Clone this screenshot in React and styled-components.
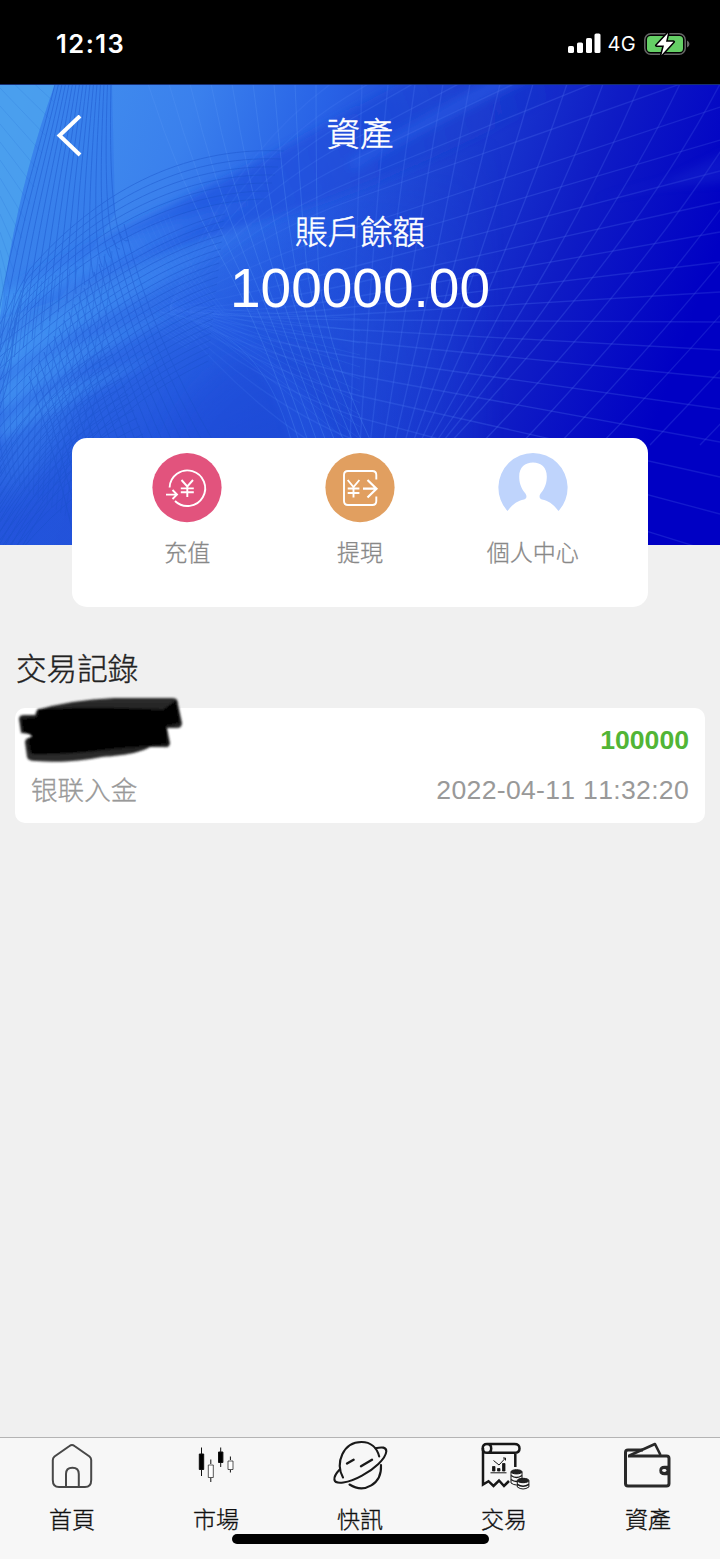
import React from "react";
import styled, { createGlobalStyle } from "styled-components";

const GlobalStyle = createGlobalStyle`
  *, *::before, *::after { box-sizing: border-box; }
  body { margin: 0; background: #f0f0f0; }
  svg { display: block; }
`;

const Screen = styled.div`
  width: 720px;
  height: 1559px;
  display: flex;
  flex-direction: column;
  background: #f0f0f0;
  font-family: "Liberation Sans", "Noto Sans CJK TC", sans-serif;
  font-weight: 300;
  font-kerning: none;
  overflow: hidden;
`;

const StatusBar = styled.div`
  flex: none;
  height: 84px;
  padding: 3px 30px 0 56px;
  display: flex;
  align-items: center;
  background: #000;
  color: #fff;
  font-family: Inter, sans-serif;
`;
const Clock = styled.span`
  flex: 1;
  font-size: 25.5px;
  font-weight: 600;
  letter-spacing: 1.5px;
`;
const Network = styled.span`
  font-size: 20px;
  font-weight: 400;
  margin: 0 8px 0 7px;
  letter-spacing: 0.3px;
`;

const Header = styled.header`
  flex: none;
  position: relative;
  height: 461px;
  color: #fff;
  background: #1a35d0;
`;
const Backdrop = styled.svg`
  position: absolute;
  inset: 0;
`;
const HeaderContent = styled.div`
  position: relative;
  display: flex;
  flex-direction: column;
  align-items: center;
  padding-top: 2px;
`;
const TitleBar = styled.div`
  width: 100%;
  height: 100px;
  padding: 0 56px;
  display: grid;
  grid-template-columns: 26px 1fr 26px;
  align-items: center;
`;
const Title = styled.h1`
  margin: -2px 0 0;
  text-align: center;
  font-size: 33.5px;
  font-weight: 300;
  line-height: 48px;
  -webkit-text-stroke: 0.5px;
`;
const BalanceLabel = styled.div`
  margin-top: 23px;
  font-size: 32.5px;
  line-height: 48px;
  -webkit-text-stroke: 0.5px;
`;
const Balance = styled.div`
  font-size: 55px;
  line-height: 60px;
  font-weight: 400;
  margin-top: 1px;
`;

const ActionCard = styled.section`
  flex: none;
  position: relative;
  width: 576px;
  height: 169px;
  margin: -107px auto 0;
  padding: 15px 29px 0;
  border-radius: 15px;
  background: #fff;
  display: grid;
  grid-template-columns: repeat(3, 1fr);
`;
const Action = styled.div`
  display: flex;
  flex-direction: column;
  align-items: center;
  gap: 13px;
  color: #888;
  font-size: 23px;
  line-height: 34px;
  -webkit-text-stroke: 0.3px;
`;

const Records = styled.section`
  flex: 1;
  padding: 39px 15px 0;
`;
const RecordsTitle = styled.h2`
  margin: 0 0 16px 1px;
  color: #222;
  font-size: 30.6px;
  line-height: 46px;
  font-weight: 300;
  -webkit-text-stroke: 0.4px;
`;
const Record = styled.article`
  position: relative;
  height: 115px;
  padding: 12px 16px 0;
  border-radius: 10px;
  background: #fff;
`;
const RecordLine = styled.div`
  display: flex;
  justify-content: ${(p) => (p.$end ? "flex-end" : "space-between")};
  height: ${(p) => (p.$end ? 40 : 36)}px;
  margin-top: ${(p) => (p.$end ? 0 : 12)}px;
  line-height: 40px;
  color: #999;
  font-size: 26.6px;
`;
const Method = styled.span`
  font-family: "Noto Sans CJK SC", sans-serif;
  line-height: 34px;
  -webkit-text-stroke: 0.3px;
`;
const Time = styled.span`
  line-height: 36px;
  font-weight: 400;
  letter-spacing: 0.3px;
`;
const Amount = styled.strong`
  color: #52b536;
  font-weight: 700;
  font-size: 26.6px;
`;
const Scribble = styled.svg`
  position: absolute;
  left: 0;
  top: -14px;
`;

const TabBar = styled.nav`
  flex: none;
  position: relative;
  height: 122px;
  border-top: 1px solid #b4b4b4;
  background: #f7f7f7;
  display: grid;
  grid-template-columns: repeat(5, 1fr);
`;
const Tab = styled.div`
  display: flex;
  flex-direction: column;
  align-items: center;
  gap: 9px;
  color: #111;
  font-size: 23px;
  line-height: 34px;
  -webkit-text-stroke: 0.35px;
`;
const HomeIndicator = styled.div`
  position: absolute;
  left: 232px;
  top: 96px;
  width: 257px;
  height: 10px;
  border-radius: 5px;
  background: #000;
`;

const range = (n) => Array.from({ length: n }, (_, i) => i);

/* Light lines falling from the top edge: [x at the top, bend x, bottom x] */
const steepLines = [
  [362, 357, 350], [388, 372, 360], [415, 392, 370], [443, 416, 383],
  [470, 440, 394], [500, 461, 404], [533, 486, 412], [567, 512, 419],
  [603, 542, 427], [640, 570, 434], [680, 600, 440], [720, 633, 448],
  [762, 668, 480], [806, 705, 520], [853, 745, 558], [903, 790, 600],
  [957, 838, 650], [1015, 890, 700],
];

/* Light lines fanning out to the right edge: [y at x=360, y at x=720] */
const fanLines = [
  [-20, -260], [5, -215], [30, -175], [52, -138], [73, -98], [94, -52],
  [113, -14], [142, 23], [162, 56], [181, 87], [198, 118], [212, 148],
  [222, 178], [230, 208], [236, 238], [246, 266], [258, 294], [274, 325],
  [292, 358], [312, 393], [334, 430], [358, 470], [384, 512],
];

const fanPath = ([mid, edge]) => {
  const slope = (edge - mid) / 360;
  return `M170 ${226 + slope * 6}Q${255 + slope * 30} ${mid - slope * 115} 360 ${mid}L720 ${edge}`;
};

function HeaderBackdrop() {
  return (
    <Backdrop width="720" height="461" viewBox="0 0 720 461" fill="none">
      <defs>
        <linearGradient id="base" gradientUnits="userSpaceOnUse" x1="0" y1="30" x2="680" y2="270">
          <stop offset="0" stopColor="#4594ee" />
          <stop offset="0.25" stopColor="#3a80ed" />
          <stop offset="0.42" stopColor="#2862e6" />
          <stop offset="0.6" stopColor="#1c40d2" />
          <stop offset="0.8" stopColor="#0f1cc5" />
          <stop offset="1" stopColor="#0000c4" />
        </linearGradient>
        <linearGradient id="low" gradientUnits="userSpaceOnUse" x1="120" y1="170" x2="190" y2="380">
          <stop offset="0" stopColor="#2050da" stopOpacity="0" />
          <stop offset="0.55" stopColor="#2050da" stopOpacity="0.6" />
          <stop offset="1" stopColor="#1f4cd8" stopOpacity="0.85" />
        </linearGradient>
        <linearGradient id="fadeRight" x1="0" y1="0" x2="1" y2="0">
          <stop offset="0" stopColor="#fff" />
          <stop offset="0.4" stopColor="#fff" />
          <stop offset="0.7" stopColor="#000" />
        </linearGradient>
        <linearGradient id="ray" gradientUnits="userSpaceOnUse" x1="0" y1="300" x2="330" y2="150">
          <stop offset="0" stopColor="#48a2f6" stopOpacity="0.65" />
          <stop offset="0.5" stopColor="#3c8af3" stopOpacity="0.45" />
          <stop offset="1" stopColor="#2f72ee" stopOpacity="0" />
        </linearGradient>
        <linearGradient id="shade" gradientUnits="userSpaceOnUse" x1="30" y1="210" x2="560" y2="0">
          <stop offset="0" stopColor="#2560e6" stopOpacity="0.3" />
          <stop offset="0.35" stopColor="#1e50de" stopOpacity="0.7" />
          <stop offset="0.7" stopColor="#1b40d2" stopOpacity="0.5" />
          <stop offset="1" stopColor="#1838ca" stopOpacity="0" />
        </linearGradient>
        <linearGradient id="gridFade" gradientUnits="userSpaceOnUse" x1="170" y1="0" x2="720" y2="0">
          <stop offset="0" stopColor="#4a85f5" stopOpacity="0.08" />
          <stop offset="0.3" stopColor="#467bf4" stopOpacity="0.26" />
          <stop offset="0.65" stopColor="#4868ea" stopOpacity="0.33" />
          <stop offset="1" stopColor="#3648de" stopOpacity="0.33" />
        </linearGradient>
        <mask id="lowMask"><rect width="720" height="461" fill="url(#fadeRight)" /></mask>
        <filter id="soft" x="-20%" y="-20%" width="140%" height="140%"><feGaussianBlur stdDeviation="5" /></filter>
        <filter id="softer" x="-20%" y="-20%" width="140%" height="140%"><feGaussianBlur stdDeviation="12" /></filter>
      </defs>
      <rect width="720" height="461" fill="url(#base)" />
      <rect width="720" height="461" fill="url(#low)" mask="url(#lowMask)" />
      <path d="M0 0H55Q15 110 0 235Z" fill="#4ca3ee" opacity="0.75" />
      <path d="M55 0Q15 110 0 235L60 215L115 130L112 0Z" fill="#2c70e8" opacity="0.4" />
      <g filter="url(#soft)">
        <path d="M20 195C110 150 210 105 300 55Q370 15 420 -10L600 -10C470 60 360 110 250 140C160 165 80 200 20 230Z" fill="url(#shade)" />
        <path d="M0 212C90 165 170 130 270 112C190 150 90 185 0 236Z" fill="url(#ray)" />
        <path d="M0 262C80 210 170 170 290 125C190 190 90 235 0 290Z" fill="url(#ray)" />
        <path d="M0 300C60 262 110 245 190 222C120 262 60 285 0 330Z" fill="url(#ray)" opacity="0.85" />
        <path d="M0 338C50 305 90 290 160 272C100 305 40 330 0 358Z" fill="url(#ray)" opacity="0.7" />
        <path d="M350 88Q450 30 540 -10H500Q420 35 350 75Z" fill="#2d6cf0" opacity="0.4" />
      </g>
      <path d="M0 230Q70 220 80 300Q60 380 0 410Z" fill="#3f8df2" opacity="0.3" filter="url(#softer)" />
      <path d="M180 330Q240 240 330 280V461H120Z" fill="#1c49d6" opacity="0.35" filter="url(#softer)" />
      <path d="M160 228C225 238 270 275 292 360H340L300 300L200 200Z" fill="#2c62ec" opacity="0.22" filter="url(#soft)" />
      <path d="M590 116Q640 104 664 98L730 66V98L664 102Z" fill="#2f4cdb" opacity="0.22" filter="url(#soft)" />

      <g stroke="url(#gridFade)" strokeWidth="1.3">
        {steepLines.map(([a, b, c]) => (
          <path key={a} d={`M${a} 0Q${b} 165 ${c} 361`} />
        ))}
        {fanLines.map((line) => (
          <path key={line[1]} d={fanPath(line)} />
        ))}
      </g>
      <g stroke="#5a98f6" strokeWidth="1" opacity="0.28">
        {range(9).map((i) => (
          <path key={i} d={`M${148 + i * 21} 0Q${180 + i * 17} 100 ${222 + i * 12} 175T${300 + i * 9} 360`} />
        ))}
      </g>
      <g stroke="#4a8af2" strokeWidth="0.9" opacity="0.18">
        {range(13).map((i) => (
          <path key={i} d={`M0 ${-32 + i * 18}L${54 - i * 4} ${18 + i * 17}`} stroke="#1c60d0" />
        ))}
        {range(20).map((i) => (
          <path key={i} d={`M${168 - i * 4.5} ${130 + i * 2.5}Q${185 - i * 4} ${180 + i * 2} ${225 - i * 2} ${226 + i * 2}`} />
        ))}
        {range(12).map((i) => (
          <path key={i} d={`M190 ${222 + i}Q${245 + i} ${228 + i * 5} 360 ${235 + i * 12}`} />
        ))}
      </g>
      <g stroke="#174fc6" strokeWidth="0.9" opacity="0.46">
        {range(17).map((i) => (
          <path key={i} d={`M${55 + i * 3.5} 0C${32 + i * 4.8} 95 ${5 + i * 6.8} 165 ${-12 + i * 8.8} ${300 - i * 9}`} />
        ))}
        {range(7).map((i) => (
          <path key={i} d={`M${284 - i * 3} ${67 + i * 8}C${180 + i * 2} ${62 + i * 9} ${95} ${110 + i * 7} ${30 - i * 3} ${185 + i * 10}Q15 ${210 + i * 12} 0 ${240 + i * 14}`} />
        ))}
        {range(22).map((i) => (
          <path key={i} d={`M${225 - i * 0.8} ${130 + i * 7}C${150} ${148 + i * 7.5} ${70} ${205 + i * 7} -5 ${265 + i * 12}`} />
        ))}
        {range(20).map((i) => (
          <path key={i} d={`M${124 - i * 5} ${140 + i * 8}Q${150 - i * 5} ${250 + i * 6} ${216 - i * 7} ${362 + i * 7}`} />
        ))}
        {range(17).map((i) => (
          <path key={i} d={`M${i * 7} ${215 - i * 3}Q${-22 + i * 8} ${310 - i * 3} ${i * 4.5 + 2} ${390 + i * 3}`} opacity="0.6" />
        ))}
        {range(14).map((i) => (
          <path key={i} d={`M0 ${375 + i * 9}Q${40 + i * 2} ${300 + i * 8} ${110 + i * 3} ${262 + i * 8}`} />
        ))}
      </g>
      <path d="M160 228C225 238 270 275 292 360" stroke="#4280f2" opacity="0.3" />
      <path d="M0 .5H720" stroke="#172f72" />
    </Backdrop>
  );
}

function BackIcon() {
  return (
    <svg width="26" height="42" viewBox="0 0 26 42" fill="none" stroke="#fff" strokeWidth="4">
      <path d="M24 1L3.5 20.5L24 40" />
    </svg>
  );
}

function SignalIcon() {
  return (
    <svg width="33" height="21" viewBox="0 0 33 21" fill="#fff">
      <rect x="0" y="13" width="6" height="7" rx="1.6" />
      <rect x="9" y="9.5" width="6" height="10.5" rx="1.6" />
      <rect x="18" y="5" width="6" height="15" rx="1.6" />
      <rect x="26.5" y="0.5" width="6" height="19.5" rx="1.6" />
    </svg>
  );
}

function BatteryIcon() {
  return (
    <svg width="46" height="24" viewBox="0 0 46 24">
      <rect x="0.8" y="1.8" width="40.4" height="20.4" rx="6" fill="none" stroke="#666" strokeWidth="1.5" />
      <path d="M43 8.5Q45.5 9.5 45.5 12T43 15.5Z" fill="#666" />
      <rect x="3" y="4" width="36" height="16" rx="3.5" fill="#65cf66" />
      <path d="M24 1L12.5 13.5H20L17.5 23L29.5 9.8H22Z" fill="#fff" stroke="#000" strokeWidth="3" strokeLinejoin="round" paintOrder="stroke" />
    </svg>
  );
}

function DepositIcon() {
  return (
    <svg width="70" height="70" viewBox="0 0 70 70" fill="none" stroke="#fff" strokeWidth="1.9">
      <circle cx="35" cy="34.6" r="34.6" fill="#e2537d" stroke="none" />
      <path d="M17.6 34.5A17.8 17.8 0 1 1 23 48" />
      <path d="M14 41.6H24M20.5 37L25 41.6L20.5 46" />
      <path d="M29.5 27L35.3 33.5L41 27M35.3 33.5V44M28.8 35.4H41.8M28.8 39.2H41.8" />
    </svg>
  );
}

function WithdrawIcon() {
  return (
    <svg width="70" height="70" viewBox="0 0 70 70" fill="none" stroke="#fff" strokeWidth="1.9">
      <circle cx="35" cy="34.6" r="34.6" fill="#e19f60" stroke="none" />
      <path d="M51.3 26.5V22Q51.3 18 47.3 18H23Q19 18 19 22V48Q19 52 23 52H47.3Q51.3 52 51.3 48V43.5" />
      <path d="M22.7 27L28.5 34L34.4 27M28.5 34V44.5M22.7 35.5H34.4M22.7 40H34.4" />
      <path d="M38 35.7H51M42.5 27L51.5 35.7L42.5 44.5" strokeWidth="2.2" />
    </svg>
  );
}

function ProfileIcon() {
  return (
    <svg width="70" height="70" viewBox="0 0 70 70">
      <path d="M9.5 58A34.6 34.6 0 1 1 60.5 58C55 51 50.5 48 44 46.6C40.5 45.5 41.3 42 43 40C47.5 34.5 48.8 29 48.8 23.5C48.8 14.5 43 9.6 35 9.6S21.2 14.5 21.2 23.5C21.2 29 22.5 34.5 27 40C28.7 42 29.5 45.5 26 46.6C19.5 48 15 51 9.5 58Z" fill="#bfd4fc" />
    </svg>
  );
}

function HomeIcon() {
  return (
    <svg width="60" height="56" viewBox="0 0 60 56" fill="none" stroke="#484848" strokeWidth="2">
      <path d="M27.5 8Q30 6 32.5 8L47.5 18.5Q49.2 20 49.2 22V42Q49.2 49 43 49H17Q10.8 49 10.8 42V22Q10.8 20 12.5 18.5Z" />
      <path d="M24 49V36Q24 29.8 30.4 29.8T36.8 36V49" />
    </svg>
  );
}

function CandlesIcon() {
  return (
    <svg width="60" height="56" viewBox="0 0 60 56" fill="#000" stroke="#111">
      <path d="M15.5 9.5V38M24.8 21.5V26M24.8 40V44M34.7 9.5V29M44.4 18.5V22M44.4 32V34.5" />
      <path d="M13.3 16H17.7V31.5H13.3ZM32.5 14H36.9V24.5H32.5Z" />
      <path d="M22.3 27H27.3V39.5H22.3ZM42 23H47V31.5H42Z" fill="#fff" strokeWidth="0.7" />
    </svg>
  );
}

function PlanetIcon() {
  return (
    <svg width="60" height="56" viewBox="0 0 60 56" fill="none" stroke="#191919" strokeWidth="2.1" strokeLinecap="round">
      <path d="M13 39.5C5 25 13 4 31.5 4C41 4 47 10 49.2 18.5" />
      <path d="M45.5 10.2C52 8.8 56.5 9 56.3 13.5C55.6 21 44 31 32 37.7C18 45.5 5.4 46.8 4.4 41.8C3.9 38.5 6.8 34.5 9.7 31.5" />
      <path d="M19.5 46.5C34.5 56 52 46 51 27" />
      <path d="M17 25.5L23.6 21.8M31 28.2L42 21.8" strokeWidth="2.4" />
    </svg>
  );
}

function TradeIcon() {
  return (
    <svg width="60" height="56" viewBox="0 0 60 56" fill="none" stroke="#171717" strokeWidth="2.5">
      <g transform="translate(-1.5 0)">
        <path d="M10.5 10V46.5L16 43.2L21 48L26.5 42.5L31.5 48L36.5 43" />
        <path d="M14.5 14.8H42Q47 14.8 47 10.4T42 6H14.5Q10.2 6 10.2 10.4T14.5 14.8Q18.7 14.8 18.7 10.4T14.5 6M42.8 15V29" strokeWidth="2.5" />
        <path d="M18 34.8H34" strokeWidth="1" />
        <path d="M20 28.5H22.5V33H20ZM25 30.5H27.5V33H25ZM30 25.5H32.5V33H30Z" fill="#171717" strokeWidth="0.8" />
        <path d="M21 22.5L26.5 27L33 20M30.5 20H33V22.5" strokeWidth="1" />
        <g fill="#f7f7f7" strokeWidth="1">
          <path d="M38.5 34V45Q44 49 49.5 45V34" />
          <path d="M38.5 37.5Q44 41.5 49.5 37.5M38.5 41.5Q44 45.5 49.5 41.5" fill="none" strokeWidth="1.5" />
          <ellipse cx="44" cy="33.8" rx="5.5" ry="2.1" fill="#222" />
          <path d="M44.8 43V49Q50.5 53 56.4 49V43" />
          <path d="M44.8 46.3Q50.5 50 56.4 46.3" fill="none" strokeWidth="1.5" />
          <ellipse cx="50.6" cy="42.5" rx="5.8" ry="2.2" fill="#222" />
        </g>
      </g>
    </svg>
  );
}

function WalletIcon() {
  return (
    <svg width="60" height="56" viewBox="0 0 60 56" fill="none" stroke="#292929" strokeWidth="3" strokeLinejoin="round">
      <path d="M7.5 46V14.5Q7.5 12 10 12H25" />
      <path d="M10 18H48.5Q51 18 51 20.5V45.5Q51 48 48.5 48H10Q7.5 48 7.5 45.5V17" />
      <path d="M11.5 17.5L37 6L42.5 17" strokeWidth="2.6" />
      <path d="M51 28.8H46.5Q42.3 28.8 42.3 32.5T46.5 36.2H51Z" fill="#292929" strokeWidth="2" />
      <ellipse cx="46.3" cy="32.5" rx="2.2" ry="1.4" fill="#f7f7f7" stroke="none" />
    </svg>
  );
}

function Redaction() {
  return (
    <Scribble width="180" height="72" viewBox="0 0 180 72">
      <defs>
        <linearGradient id="ink" x1="0" y1="0" x2="0" y2="1">
          <stop offset="0" stopColor="#2d2d2d" />
          <stop offset="0.2" stopColor="#222" />
          <stop offset="0.8" stopColor="#222" />
          <stop offset="0.88" stopColor="#2b2b2b" />
        </linearGradient>
        <filter id="edge"><feGaussianBlur stdDeviation="0.8" /></filter>
      </defs>
      <g filter="url(#edge)">
        <path d="M22 16Q55 6 99 4L158 4Q163 4 163 10L167 29Q167 34 162 34H152L155 49Q155 54 149 53L135 53C121 61 98 62 87 63C67 67 43 69 20 67Q13 67 12 63L10 48Q10 44 17 43L15 40L6 39L4 25Q4 21 9 21H20Z" fill="url(#ink)" />
        <path d="M23 15Q98 12 148 16L161 6L165 29L151 32L153 50L135 52Q99 54 72 58Q38 61 16 60L13 45L18 42L8 37L6 25L22 23Z" fill="#000" />
      </g>
    </Scribble>
  );
}

const actions = [
  { label: "充值", Icon: DepositIcon },
  { label: "提現", Icon: WithdrawIcon },
  { label: "個人中心", Icon: ProfileIcon },
];

const tabs = [
  { label: "首頁", Icon: HomeIcon },
  { label: "市場", Icon: CandlesIcon },
  { label: "快訊", Icon: PlanetIcon },
  { label: "交易", Icon: TradeIcon },
  { label: "資產", Icon: WalletIcon },
];

export default function App() {
  return (
    <>
      <GlobalStyle />
      <Screen lang="zh-Hant">
        <StatusBar>
          <Clock>12:13</Clock>
          <SignalIcon />
          <Network>4G</Network>
          <BatteryIcon />
        </StatusBar>
        <Header>
          <HeaderBackdrop />
          <HeaderContent>
            <TitleBar>
              <BackIcon />
              <Title>資產</Title>
            </TitleBar>
            <BalanceLabel>賬戶餘額</BalanceLabel>
            <Balance>100000.00</Balance>
          </HeaderContent>
        </Header>
        <ActionCard>
          {actions.map(({ label, Icon }) => (
            <Action key={label}>
              <Icon />
              {label}
            </Action>
          ))}
        </ActionCard>
        <Records>
          <RecordsTitle>交易記錄</RecordsTitle>
          <Record>
            <RecordLine $end>
              <Amount>100000</Amount>
            </RecordLine>
            <RecordLine>
              <Method lang="zh-Hans">银联入金</Method>
              <Time>2022-04-11 11:32:20</Time>
            </RecordLine>
            <Redaction />
          </Record>
        </Records>
        <TabBar>
          {tabs.map(({ label, Icon }) => (
            <Tab key={label}>
              <Icon />
              {label}
            </Tab>
          ))}
          <HomeIndicator />
        </TabBar>
      </Screen>
    </>
  );
}
